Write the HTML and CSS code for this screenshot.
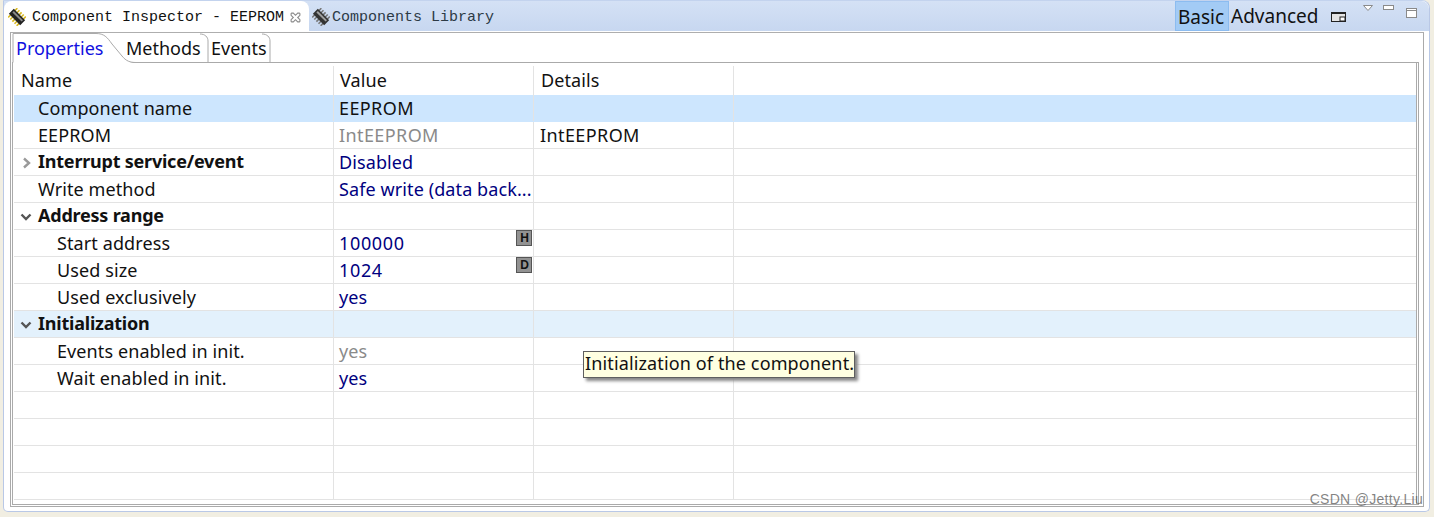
FILE: index.html
```html
<!DOCTYPE html>
<html lang="en">
<head>
<meta charset="utf-8">
<title>Component Inspector</title>
<link rel="stylesheet" href="styles.css">
</head>
<body>
<div class="panel">
  <div class="viewbar">
    <div class="viewtab active">
      <svg class="chip" viewBox="0 0 18 18"><g transform="rotate(45 9 9)"><path d="M3 2.500v13M6 2.500v13M9 2.500v13M12 2.500v13M15 2.500v13" stroke="#d8b820" stroke-width="1.600"/><rect x="1" y="5.500" width="16" height="7" fill="#222"/><rect x="2.500" y="7" width="13" height="2" fill="#8a8a8a"/></g></svg>
      <span class="viewtitle">Component Inspector - EEPROM</span>
      <svg class="close" viewBox="0 0 10 10"><path d="M1.500 1 3 1 5 3 7 1 8.500 1 9 1.500 9 3 7 5 9 7 9 8.500 8.500 9 7 9 5 7 3 9 1.500 9 1 8.500 1 7 3 5 1 3 1 1.500Z" fill="#fff" stroke="#8a8a8a"/></svg>
    </div>
    <div class="viewtab">
      <svg class="chip" viewBox="0 0 18 18"><g transform="rotate(45 9 9)"><path d="M3 2.500v13M6 2.500v13M9 2.500v13M12 2.500v13M15 2.500v13" stroke="#777" stroke-width="1.600"/><rect x="1" y="5.500" width="16" height="7" fill="#333"/><rect x="2.500" y="7" width="13" height="2" fill="#a0a0a0"/></g></svg>
      <span class="viewtitle">Components Library</span>
    </div>
    <div class="spacer"></div>
    <div class="mode on">Basic</div>
    <div class="mode">Advanced</div>
    <svg class="fastview" viewBox="0 0 16 12"><rect x="0.500" y="1.500" width="14" height="9" fill="#e4e4e4" stroke="#222"/><rect x="0.500" y="1.500" width="14" height="1.500" fill="#222"/><rect x="9" y="6" width="5" height="4" fill="#fff" stroke="#222"/></svg>
    <svg class="menu" viewBox="0 0 10 6"><path d="M.5.500h9L5 5.500Z" fill="#fff" stroke="#8a8a8a"/></svg>
    <svg class="winbtn min" viewBox="0 0 11 11"><rect x="0.500" y="0.500" width="10" height="4" fill="#fff" stroke="#8a8a8a"/></svg>
    <svg class="winbtn max" viewBox="0 0 11 11"><rect x="0.500" y="0.500" width="10" height="9" fill="#fff" stroke="#8a8a8a"/><path d="M0.500 2.500h10" stroke="#8a8a8a"/></svg>
  </div>

  <div class="content">
    <div class="subtabs">
      <svg class="subshape" viewBox="0 0 262 30"><path class="patch" d="M1 30V1H84C92 1 95 4 100 11L110 23C114 28 118 30 124 30Z"/><path class="outline" d="M1 29.500V.5H84C92 .5 95 4 100 11L110 23C114 28 118 29.500 124 29.500"/><path class="outline" d="M196 29V8C196 4 193 1 188 1"/><path class="outline" d="M258 29V8C258 4 255 1 250 1"/></svg>
      <span class="subtab current">Properties</span>
      <span class="subtab methods">Methods</span>
      <span class="subtab events">Events</span>
    </div>
    <div class="grid">
      <div class="row head"><div class="c name">Name</div><div class="c val">Value</div><div class="c det">Details</div><div class="c rest"></div></div>
      <div class="row sel"><div class="c name l1">Component name</div><div class="c val wide">EEPROM</div><div class="c det"></div><div class="c rest"></div></div>
      <div class="row"><div class="c name l1">EEPROM</div><div class="c val gray wide">IntEEPROM</div><div class="c det wide">IntEEPROM</div><div class="c rest"></div></div>
      <div class="row"><div class="c name l1 bold"><svg class="tw" viewBox="0 0 12 12"><path d="M4 1.500 9 6 4 10.500" fill="none" stroke="#9a9a9a" stroke-width="2.400"/></svg>Interrupt service/event</div><div class="c val blue">Disabled</div><div class="c det"></div><div class="c rest"></div></div>
      <div class="row"><div class="c name l1">Write method</div><div class="c val blue">Safe write (data back...</div><div class="c det"></div><div class="c rest"></div></div>
      <div class="row"><div class="c name l1 bold"><svg class="tw" viewBox="0 0 12 12"><path d="M1.500 3.500 6 8 10.500 3.500" fill="none" stroke="#555" stroke-width="2.400"/></svg>Address range</div><div class="c val"></div><div class="c det"></div><div class="c rest"></div></div>
      <div class="row"><div class="c name l2">Start address</div><div class="c val blue num">100000<span class="badge">H</span></div><div class="c det"></div><div class="c rest"></div></div>
      <div class="row"><div class="c name l2">Used size</div><div class="c val blue num">1024<span class="badge">D</span></div><div class="c det"></div><div class="c rest"></div></div>
      <div class="row"><div class="c name l2">Used exclusively</div><div class="c val blue">yes</div><div class="c det"></div><div class="c rest"></div></div>
      <div class="row hover"><div class="c name l1 bold"><svg class="tw" viewBox="0 0 12 12"><path d="M1.500 3.500 6 8 10.500 3.500" fill="none" stroke="#555" stroke-width="2.400"/></svg>Initialization</div><div class="c val"></div><div class="c det"></div><div class="c rest"></div></div>
      <div class="row"><div class="c name l2">Events enabled in init.</div><div class="c val gray">yes</div><div class="c det"></div><div class="c rest"></div></div>
      <div class="row"><div class="c name l2">Wait enabled in init.</div><div class="c val blue">yes</div><div class="c det"></div><div class="c rest"></div></div>
      <div class="row"><div class="c name"></div><div class="c val"></div><div class="c det"></div><div class="c rest"></div></div>
      <div class="row"><div class="c name"></div><div class="c val"></div><div class="c det"></div><div class="c rest"></div></div>
      <div class="row"><div class="c name"></div><div class="c val"></div><div class="c det"></div><div class="c rest"></div></div>
      <div class="row"><div class="c name"></div><div class="c val"></div><div class="c det"></div><div class="c rest"></div></div>
    </div>
  </div>
  <div class="tooltip">Initialization of the component.</div>
</div>
<div class="watermark">CSDN @Jetty.Liu</div>
</body>
</html>
```
FILE: styles.css
```css
* { box-sizing: border-box; }
html, body { margin: 0; height: 517px; overflow: hidden; }
body {
  background: #f1eee2;
  font-family: "Noto Sans", "Open Sans", sans-serif;
  font-size: 18px;
  color: #111;
  position: relative;
}
.panel {
  position: relative;
  width: 1427px;
  height: 512px;
  margin-left: 3px;
  background: #fff;
  border: 1px solid #b9c8e6;
  border-top-color: #c3d3ee;
  border-radius: 0 8px 5px 5px;
  display: flex;
  flex-direction: column;
  padding: 0 5px 4px 6px;
}
.viewbar {
  height: 30px;
  flex: none;
  margin: 0 -5px 0 -6px;
  display: flex;
  align-items: center;
  background: linear-gradient(#d4e1f5, #c7d7f0);
  border-radius: 0 8px 0 0;
}
.viewtab {
  height: 30px;
  display: flex;
  align-items: center;
  padding-top: 2px;
  color: #2c3a46;
  font: 15px "Liberation Mono", monospace;
}
.viewtab.active {
  width: 305px;
  background: #fff;
  color: #111;
  border-radius: 8px 8px 0 0;
  padding-left: 4px;
}
.chip { width: 18px; height: 18px; flex: none; margin-right: 6px; }
.viewtab + .viewtab { padding-left: 3px; }
.viewtab + .viewtab .chip { margin-right: 2px; }
.close { width: 11px; height: 11px; margin-left: 6px; }
.spacer { flex: 1; }
.mode {
  height: 30px;
  font-size: 19px;
}
.mode.on {
  width: 54px;
  line-height: 31px;
  padding-left: 2px;
  background: #a3cbf5;
  border: 1px solid #8cbcf0;
}
.mode + .mode { width: 90px; padding-left: 2px; line-height: 30px; }
.fastview { width: 16px; height: 12px; margin: 2px 0 0 12px; }
.menu { width: 10px; height: 6px; margin: -17px 0 0 16px; }
.winbtn { width: 11px; height: 11px; }
.winbtn.min { margin: -11px 0 0 10px; }
.winbtn.max { margin: -5px 12px 0 12px; }
.content {
  flex: 1;
  border: 1px solid #aaa;
  border-top-color: #aeaeae;
  margin-top: 1px;
  padding: 0 4px 0 1px;
  display: flex;
  flex-direction: column;
  min-height: 0;
}
.subtabs {
  position: relative;
  z-index: 1;
  height: 29px;
  flex: none;
  display: flex;
  align-items: center;
  line-height: 27px;
  padding: 2px 0 0 4px;
}
.subshape { position: absolute; left: 0; top: 0; width: 262px; height: 30px; }
.subshape .patch { fill: #fff; }
.subshape .outline { fill: none; stroke: #aaa; stroke-width: 1; }
.subtab { position: relative; }
.subtab.current { color: #1010e0; width: 110px; }
.subtab.methods { width: 85px; }
.grid {
  flex: 1;
  border: 1px solid #aaa;
  border-right: 3px double #aaa;
  overflow: hidden;
  min-height: 0;
  margin-bottom: 1px;
  padding: 3px 0 0 1px;
}
.row {
  display: flex;
  height: 27px;
  border-bottom: 1px solid #e3e3e3;
  line-height: 26px;
}
.row.head { height: 29px; border-bottom: 0; line-height: 28px; }
.row.sel { background: #cde6fe; border-bottom-color: #cde6fe; }
.row.hover { background: #e3f1fc; }
.c { position: relative; border-right: 1px solid #e3e3e3; white-space: nowrap; letter-spacing: 0.1px; }
.name { width: 320px; padding-left: 6px; }
.val { width: 200px; padding-left: 5px; }
.det { width: 200px; padding-left: 6px; }
.head .name { padding-left: 7px; }
.head .val { padding-left: 6px; }
.head .det { padding-left: 7px; }
.rest { flex: 1; border-right: 0; }
.l1 { padding-left: 24px; }
.l2 { padding-left: 43px; }
.bold { font-weight: 700; letter-spacing: -0.22px; line-height: 24px; }
.blue { color: #000080; }
.gray { color: #8a8a8a; }
.wide { letter-spacing: 0.4px; }
.num { letter-spacing: 0.65px; }
.tw { position: absolute; left: 6px; top: 8px; width: 12px; height: 12px; }
.badge {
  position: absolute;
  right: 1px;
  top: 0;
  width: 16px;
  height: 16px;
  background: #929292;
  border: 1px solid #555;
  border-width: 1px 0 0 1px;
  box-shadow: inset -1px -1px 0 #555;
  color: #111;
  letter-spacing: 0;
  font: 700 12px/14px "Liberation Sans", sans-serif;
  text-align: center;
}
.tooltip {
  position: absolute;
  left: 579px;
  top: 350px;
  height: 27px;
  width: 272px;
  line-height: 23px;
  letter-spacing: 0.13px;
  background: #ffffe1;
  border: 1px solid #5f5f5f;
  box-shadow: 3px 3px 3px #888;
  padding-left: 1px;
  white-space: nowrap;
}
.watermark {
  position: absolute;
  right: 11px;
  top: 491px;
  font: 14px "Liberation Sans", sans-serif;
  letter-spacing: 0.3px;
  color: rgba(90, 90, 90, 0.75);
}
```
